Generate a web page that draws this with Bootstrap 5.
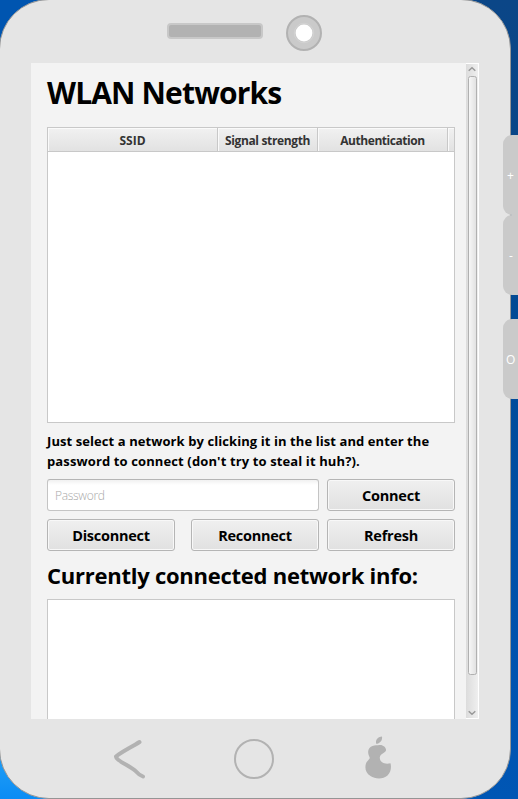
<!DOCTYPE html>
<html lang="en">
<head>
<meta charset="utf-8">
<meta name="viewport" content="width=device-width, initial-scale=1">
<title>WLAN Networks</title>
<link href="https://cdn.jsdelivr.net/npm/bootstrap@5.3.0/dist/css/bootstrap.min.css" rel="stylesheet">
<style>
html, body { height: 100%; }
body { font-family: "Open Sans", "Noto Sans", sans-serif; color: #000;
  background: linear-gradient(180deg, #0055b0 0, #0055b0 6%, #0a8cf5 92%, #1c9af5 96%, #0a8cf5 100%) 0 0 / 70px 100% no-repeat,
    linear-gradient(180deg, #0b4687 0, #084688 17%, #004a98 45%, #0053b0 85%, #0056b4 100%); }
.desk { width: 518px; height: 799px; }
.phone { width: 512px; height: 800px; margin: -1px 0 0 -1px; background: #e5e5e5; border: 1px solid #959595; border-radius: 50px; }
.phone-top { height: 63px; padding-left: 167px; }
.speaker { width: 96px; height: 16px; margin-top: 23px; background: #b2b2b2; border: 2px solid #c8c8c8; border-radius: 4px; }
.camera { width: 36px; height: 36px; margin: 15px 0 0 23px; }
.screen { width: 448px; height: 656px; margin-left: 31px; background: #f3f3f3; }
.content { width: 435px; padding: 0 11px 0 16px; }
.heading { font-size: 30px; height: 64px; line-height: 60px; letter-spacing: -.85px; }
.grid-box { border: 1px solid #c8c8c8; background: #fff; }
.net-list { height: 296px; }
.grid-head { height: 24px; border-bottom: 1px solid #c8c8c8; font-size: 12px; line-height: 25px; color: #333; letter-spacing: -.35px; }
.cell-h { background: linear-gradient(#f1f1f1, #e2e2e2); border-right: 1px solid #c8c8c8; box-shadow: inset 1px 1px #fafafa; text-align: center; white-space: nowrap; }
.w-ssid { width: 170px; letter-spacing: 0; } .w-sig { width: 100px; } .w-auth { width: 130px; letter-spacing: -.45px; }
.hint { font-size: 13px; line-height: 20px; margin: 8px 0; white-space: nowrap; }
.l1 { letter-spacing: .08px; } .l2 { letter-spacing: .12px; }
.field { width: 272px; height: 32px; padding: 0 7px; font-size: 12px; letter-spacing: -.3px; border: 1px solid #c4c4c4; border-top-color: #b5b5b5; border-radius: 3px; background: linear-gradient(#f1f1f1, #fff 5px); }
.field:focus { outline: 0; }
.field::placeholder { color: #a8a8a8; font-weight: 300; opacity: 1; }
.key { width: 128px; height: 32px; padding: 0; font-size: 14.5px; line-height: 31px; letter-spacing: -.25px; color: #000; border: 1px solid #b5b5b5; border-radius: 3px; background: linear-gradient(#f0f0f0, #e1e1e1); box-shadow: inset 0 0 0 1px #f8f8f8; }
.subhead { font-size: 22px; height: 48px; line-height: 49px; letter-spacing: -.25px; white-space: nowrap; }
.info { height: 120px; border-bottom: 0; }
.scroller { width: 13px; }
.side-key { left: 503px; width: 30px; height: 80px; padding-left: 4px; background: #cacaca; border-radius: 9px; color: #fff; font-size: 12px; line-height: 82px; }
.k-up { top: 135px; } .k-down { top: 215px; padding-left: 6px; } .k-power { top: 319px; padding-left: 3px; }
</style>
<script src="https://cdn.jsdelivr.net/npm/bootstrap@5.3.0/dist/js/bootstrap.bundle.min.js"></script>
</head>
<body class="overflow-hidden">
<div class="desk position-relative overflow-hidden">
  <div class="phone d-flex flex-column">
    <div class="phone-top d-flex">
      <div class="speaker"></div>
      <svg class="camera" viewBox="0 0 36 36"><circle cx="18" cy="18" r="17" fill="#cacaca" stroke="#b2b2b2" stroke-width="2"/><circle cx="18" cy="18" r="9.7" fill="none" stroke="#d6d6d6" stroke-width=".7"/><circle cx="18" cy="18" r="8.4" fill="#fff"/></svg>
    </div>
    <main class="screen d-flex overflow-hidden">
      <div class="content">
        <h1 class="heading fw-bold mb-0">WLAN Networks</h1>
        <div class="grid-box net-list">
          <div class="grid-head d-flex fw-bold">
            <div class="cell-h w-ssid">SSID</div>
            <div class="cell-h w-sig">Signal strength</div>
            <div class="cell-h w-auth">Authentication</div>
            <div class="cell-h flex-fill border-end-0"></div>
          </div>
        </div>
        <p class="hint fw-bold"><span class="l1">Just select a network by clicking it in the list and enter the</span><br><span class="l2">password to connect (don't try to steal it huh?).</span></p>
        <div class="d-flex gap-2 mb-2">
          <input class="field" type="password" placeholder="Password">
          <button class="btn key fw-bold">Connect</button>
        </div>
        <div class="d-flex gap-2">
          <button class="btn key fw-bold me-2">Disconnect</button>
          <button class="btn key fw-bold">Reconnect</button>
          <button class="btn key fw-bold">Refresh</button>
        </div>
        <h2 class="subhead fw-bold mb-0">Currently connected network info:</h2>
        <div class="grid-box info"></div>
      </div>
      <svg class="scroller" width="13" height="656" viewBox="0 0 13 656">
        <defs>
          <linearGradient id="track"><stop offset="0" stop-color="#dcdcdc"/><stop offset="1" stop-color="#efefef"/></linearGradient>
          <linearGradient id="thumb"><stop offset="0" stop-color="#f8f8f8"/><stop offset="1" stop-color="#e0e0e0"/></linearGradient>
        </defs>
        <path d="M0 0H13V656H0Z" fill="#fff"/><path d="M0 1H12V655H0Z" fill="url(#track)"/>
        <rect x="2.5" y="13.5" width="8" height="598" rx="2" fill="url(#thumb)" stroke="#b0b0b0"/>
        <path d="M2.7 7.8 6 4.8 9.3 7.8M2.7 648.2 6 651.2 9.3 648.2" fill="none" stroke="#999" stroke-width="1.5"/>
      </svg>
    </main>
    <svg width="510" height="79" viewBox="0 719 510 79" fill="none">
      <path d="M139.500 742 C132 747 123 751 116 756.500 Q115.500 757.500 118.500 760 C124 764 130 766 135 770.500 Q139 775 143 776.500" stroke="#b2b2b2" stroke-width="4" stroke-linecap="round" stroke-linejoin="round"/>
      <circle cx="254" cy="759" r="19" stroke="#b2b2b2" stroke-width="2"/>
      <path fill="#b2b2b2" d="M376.200 743.800C375.200 740 378 736.800 382 736.600C382.600 740 380.300 743.400 376.200 743.800ZM378 745.300C382 743.700 386.500 747 386 750.500C385.500 753 380 753.500 379.800 757.500C379.600 762 384.500 764.800 390.500 763.200C391.500 767 391 772.500 387.500 775.500C383 779.500 375 779 370.500 776C365.500 773 364.600 768 366 763.500C367 760.500 370 759.500 369.700 757.500C368.500 755 367 751.500 369.500 748C371.500 745.500 375 744.800 378 745.300Z"/>
    </svg>
  </div>
  <div class="side-key k-up position-absolute">+</div>
  <div class="side-key k-down position-absolute">-</div>
  <div class="side-key k-power position-absolute">O</div>
</div>
</body>
</html>
